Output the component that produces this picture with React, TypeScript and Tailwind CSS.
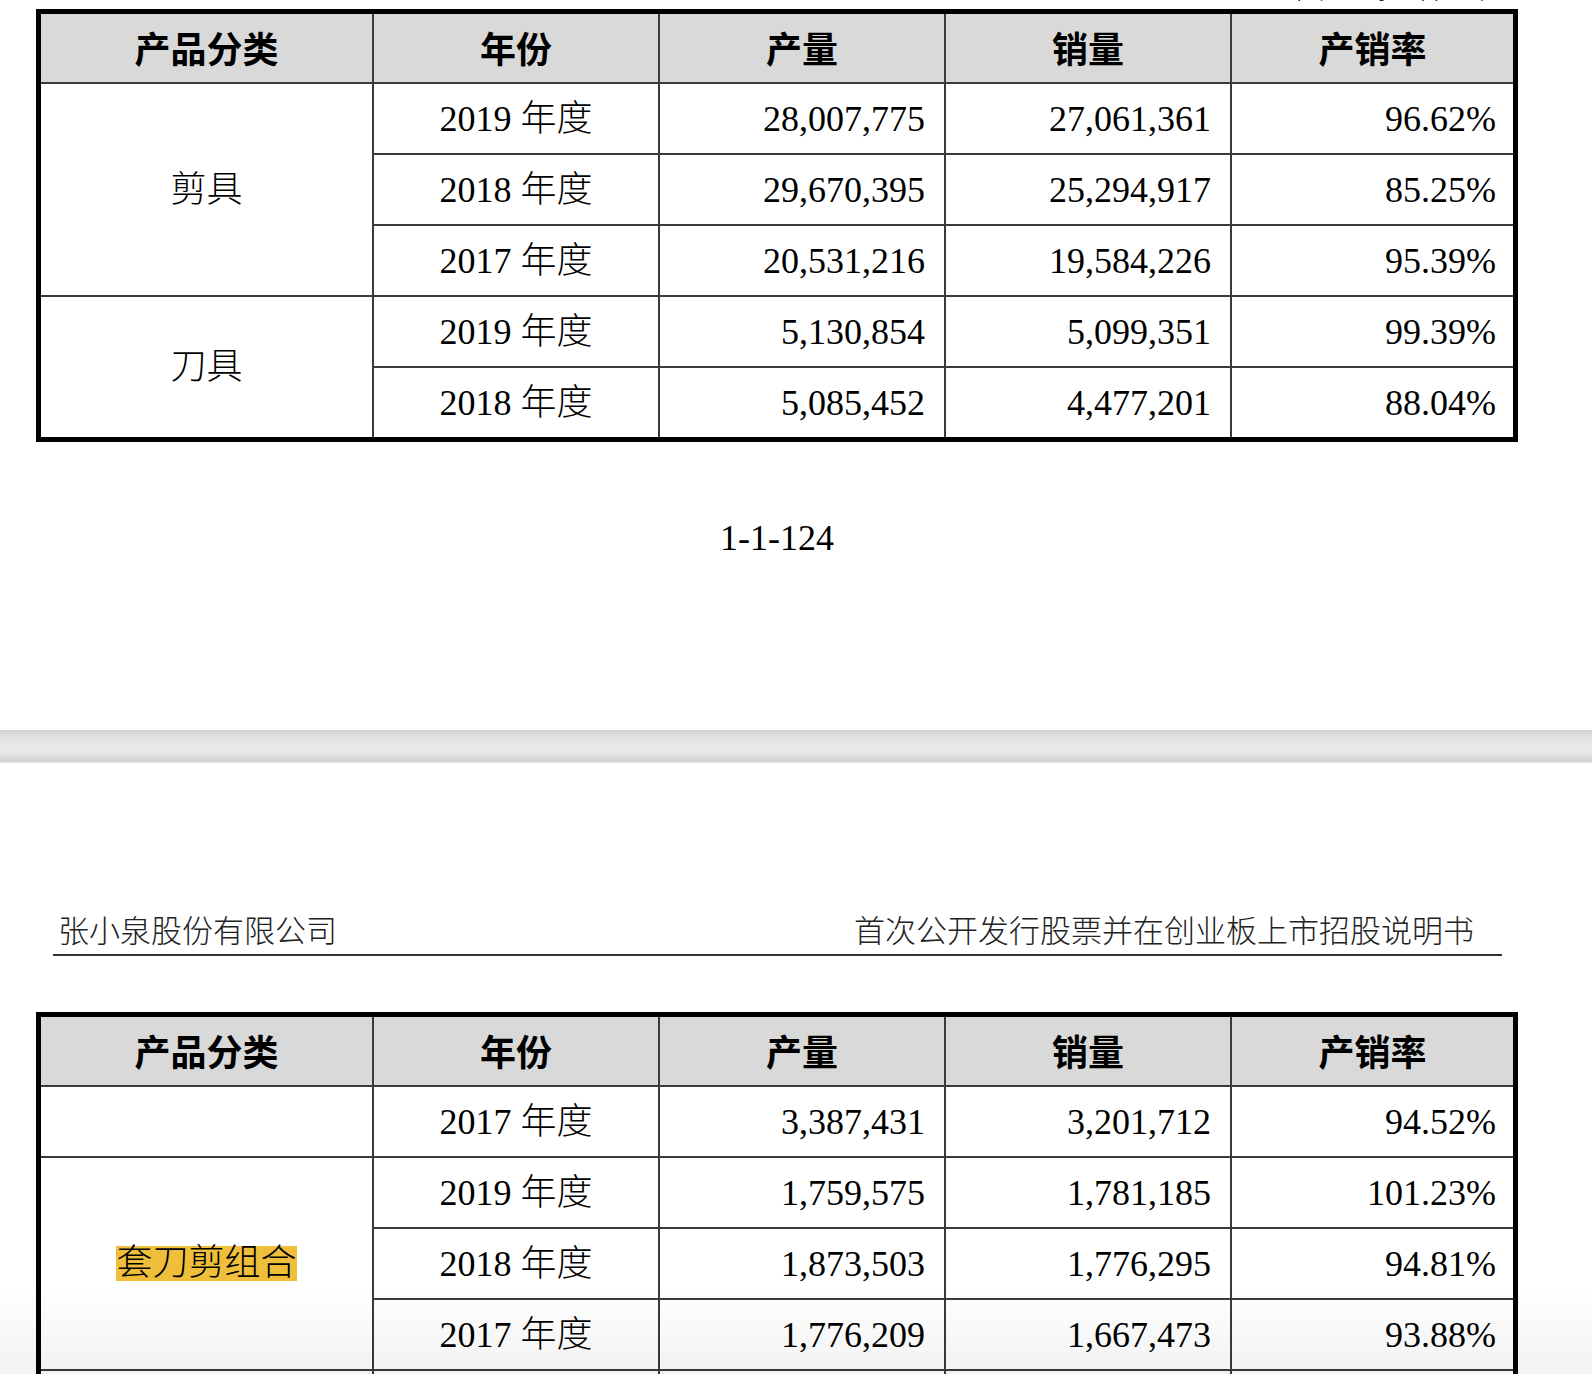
import React from "react";

const SERIF = "font-['Liberation_Serif','Noto_Sans_CJK_SC',serif]";
const SANS = "font-['Noto_Sans_CJK_SC',sans-serif]";

function H({ children, last }: { children: React.ReactNode; last?: boolean }) {
  return (
    <div
      className={`flex items-center justify-center pb-[3px] bg-[#d9d9d9] border-b-2 border-[#3a3a3a] ${
        last ? "" : "border-r-2"
      } ${SANS} font-bold text-[36px] leading-none text-black`}
    >
      {children}
    </div>
  );
}

function D({
  children,
  right,
  lastCol,
  lastRow,
  span,
}: {
  children?: React.ReactNode;
  right?: boolean;
  lastCol?: boolean;
  lastRow?: boolean;
  span?: 2 | 3;
}) {
  const spanCls = span === 3 ? "row-span-3" : span === 2 ? "row-span-2" : "";
  return (
    <div
      className={`flex items-center ${right ? (lastCol ? "justify-end pr-[17px]" : "justify-end pr-[19px]") : "justify-center"} ${
        lastCol ? "" : "border-r-2"
      } ${lastRow ? "" : "border-b-2"} border-[#3a3a3a] bg-white ${spanCls} ${SERIF} font-light text-[36px] leading-none text-black whitespace-nowrap`}
    >
      {children}
    </div>
  );
}

type R = { year: string; p: string; s: string; r: string };

function Rows({ rows, lastRow }: { rows: R[]; lastRow?: boolean }) {
  return (
    <>
      {rows.map((row, i) => {
        const lr = !!lastRow && i === rows.length - 1;
        return (
          <React.Fragment key={i}>
            <D lastRow={lr}>{row.year}</D>
            <D right lastRow={lr}>{row.p}</D>
            <D right lastRow={lr}>{row.s}</D>
            <D right lastCol lastRow={lr}>{row.r}</D>
          </React.Fragment>
        );
      })}
    </>
  );
}

function Header() {
  return (
    <>
      <H>产品分类</H>
      <H>年份</H>
      <H>产量</H>
      <H>销量</H>
      <H last>产销率</H>
    </>
  );
}

export default function App() {
  return (
    <div className="relative h-[1374px] w-[1592px] overflow-hidden bg-white">
      {/* partial caption cut off at the top */}
      <div className="relative h-[9px]">
        <span className={`absolute right-[105px] top-[-28px] ${SERIF} font-light text-[31px] leading-[31px] text-[#222]`}>
          单位：把/件/套
        </span>
      </div>

      {/* Table 1 */}
      <div className="ml-[36px] w-[1482px] border-[5px] border-black">
        <div className="grid grid-cols-[333px_286px_286px_286px_281px] grid-rows-[70px_71px_71px_71px_71px_69px]">
          <Header />
          <D span={3}>剪具</D>
          <Rows
            rows={[
              { year: "2019 年度", p: "28,007,775", s: "27,061,361", r: "96.62%" },
              { year: "2018 年度", p: "29,670,395", s: "25,294,917", r: "85.25%" },
              { year: "2017 年度", p: "20,531,216", s: "19,584,226", r: "95.39%" },
            ]}
          />
          <D span={2} lastRow>
            刀具
          </D>
          <Rows
            lastRow
            rows={[
              { year: "2019 年度", p: "5,130,854", s: "5,099,351", r: "99.39%" },
              { year: "2018 年度", p: "5,085,452", s: "4,477,201", r: "88.04%" },
            ]}
          />
        </div>
      </div>

      {/* page number */}
      <div className={`mt-[76px] ml-[36px] w-[1482px] text-center ${SERIF} text-[36px] leading-[40px] text-black`}>
        1-1-124
      </div>

      {/* page gap */}
      <div className="mt-[172px] h-[33px] bg-[linear-gradient(to_bottom,#d2d2d2,#e4e4e4_25%,#e9e9e9_65%,#d3d3d3_92%,#e2e2e2)]" />

      {/* page 2 header */}
      <div className="mt-[151px] ml-[53px] w-[1449px] flex justify-between border-b-2 border-[#333] pb-[4px] pl-[5px] pr-[28px]">
        <span className={`${SERIF} font-light text-[31px] leading-[36px] text-[#222]`}>张小泉股份有限公司</span>
        <span className={`${SERIF} font-light text-[31px] leading-[36px] text-[#222]`}>首次公开发行股票并在创业板上市招股说明书</span>
      </div>

      {/* Table 2 */}
      <div className="mt-[56px] ml-[36px] w-[1482px] border-[5px] border-black">
        <div className="grid grid-cols-[333px_286px_286px_286px_281px] grid-rows-[70px_71px_71px_71px_71px_71px]">
          <Header />
          <D />
          <Rows rows={[{ year: "2017 年度", p: "3,387,431", s: "3,201,712", r: "94.52%" }]} />
          <D span={3}>
            <span className="bg-[#efbf3b] leading-[35px]">套刀剪组合</span>
          </D>
          <Rows
            rows={[
              { year: "2019 年度", p: "1,759,575", s: "1,781,185", r: "101.23%" },
              { year: "2018 年度", p: "1,873,503", s: "1,776,295", r: "94.81%" },
              { year: "2017 年度", p: "1,776,209", s: "1,667,473", r: "93.88%" },
            ]}
          />
          <D />
          <D />
          <D />
          <D />
          <D lastCol />
        </div>
      </div>

      {/* bottom shading */}
      <div className="pointer-events-none absolute inset-x-0 bottom-0 h-[90px] bg-[linear-gradient(to_bottom,rgba(0,0,0,0),rgba(0,0,0,0.05))]" />
    </div>
  );
}
